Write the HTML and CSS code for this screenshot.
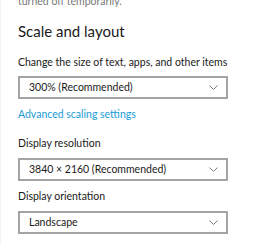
FILE: index.html
```html
<!DOCTYPE html>
<html lang="en">
<head>
  <meta charset="UTF-8">
  <title>Scale and layout</title>
  <link rel="stylesheet" href="styles.css">
</head>
<body>
  <div class="page">
    <div class="note">turned off temporarily.</div>

    <div class="heading">Scale and layout</div>

    <div class="label">Change the size of text, apps, and other items</div>
    <div class="dropdown">
      <span class="dropdown-text">300% (Recommended)</span>
      <svg class="chevron" width="9" height="5" viewBox="0 0 9 5"><path d="M0.5 0.5 L4.5 4.5 L8.5 0.5" fill="none" stroke="#7a7a7a" stroke-width="1"/></svg>
    </div>

    <a href="#" class="link">Advanced scaling settings</a>

    <div class="label">Display resolution</div>
    <div class="dropdown dropdown-close">
      <span class="dropdown-text">3840 × 2160 (Recommended)</span>
      <svg class="chevron" width="9" height="5" viewBox="0 0 9 5"><path d="M0.5 0.5 L4.5 4.5 L8.5 0.5" fill="none" stroke="#7a7a7a" stroke-width="1"/></svg>
    </div>

    <div class="label">Display orientation</div>
    <div class="dropdown dropdown-close">
      <span class="dropdown-text">Landscape</span>
      <svg class="chevron" width="9" height="5" viewBox="0 0 9 5"><path d="M0.5 0.5 L4.5 4.5 L8.5 0.5" fill="none" stroke="#7a7a7a" stroke-width="1"/></svg>
    </div>

    <div class="label label-disabled">Rotation lock</div>
  </div>
</body>
</html>
```

FILE: styles.css
```css
* {
  margin: 0;
  padding: 0;
  box-sizing: border-box;
}

body {
  background: #ffffff;
  font-family: Lato, "Noto Sans", sans-serif;
  font-size: 10.5px;
  color: #1a1a1a;
  overflow: hidden;
}

.page {
  border-left: 1px solid #f2f2f2;
  padding-left: 17px;
  width: 269px;
  height: 249px;
}

.note {
  line-height: 15px;
  margin-top: -6px;
  color: #777777;
}

.heading {
  font-size: 15px;
  line-height: 19px;
  margin-top: 13px;
}

.label {
  line-height: 15px;
  margin-top: 14px;
}

.label-disabled {
  color: #b0b0b0;
  margin-top: 12px;
}

.dropdown {
  width: 210px;
  height: 23px;
  margin-top: 6px;
  border: 2px solid #a3a3a3;
  display: flex;
  align-items: center;
  justify-content: space-between;
  padding: 0 8px 0 9px;
}

.dropdown-close {
  margin-top: 7px;
}

.dropdown-text {
  line-height: 15px;
}

.link {
  display: block;
  margin-top: 8px;
  line-height: 15px;
  color: #1a9bd4;
  text-decoration: none;
}

.dropdown-close + .label {
  margin-top: 8px;
}
```
